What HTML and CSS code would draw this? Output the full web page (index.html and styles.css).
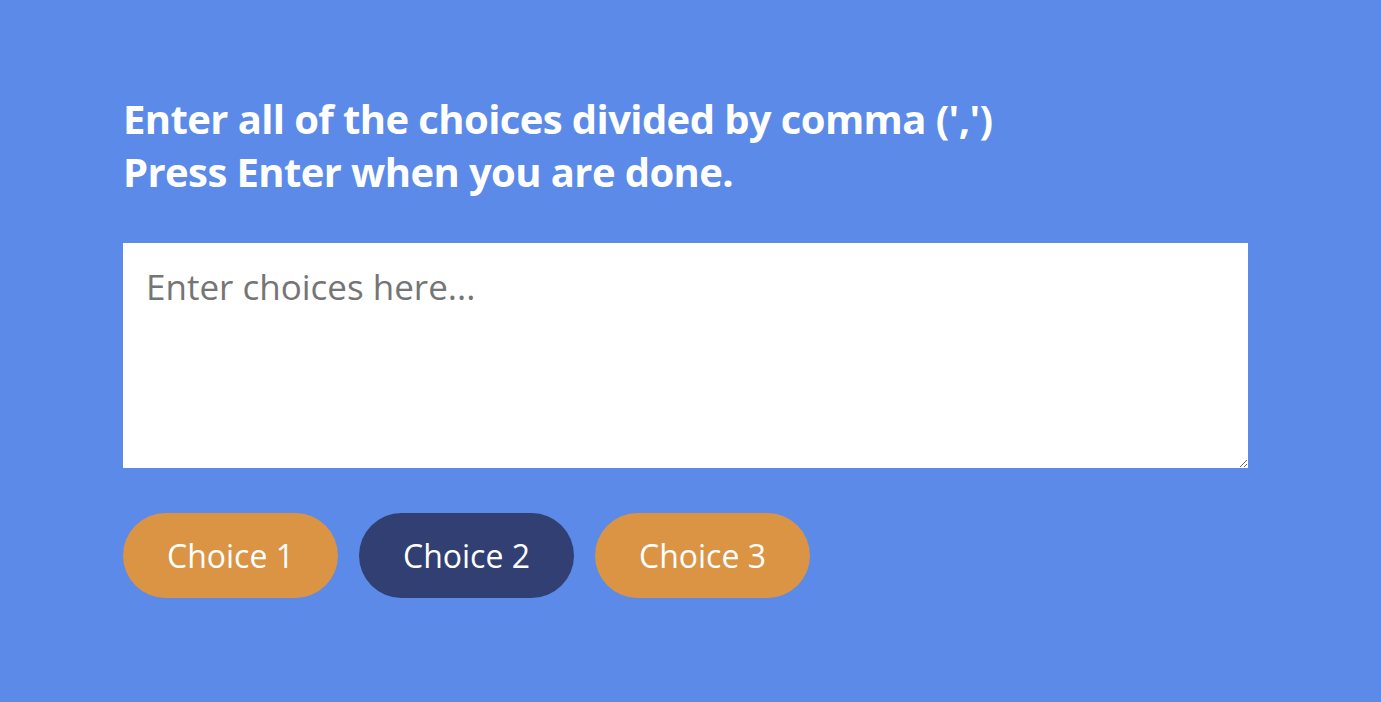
FILE: index.html
```html
<!DOCTYPE html>
<html>
<head>
<meta charset="utf-8">
<link rel="stylesheet" href="styles.css">
</head>
<body>
<main class="page">
  <h1 class="title">Enter all of the choices divided by comma (',')<br>Press Enter when you are done.</h1>
  <textarea class="choices-input" placeholder="Enter choices here..."></textarea>
  <div class="choices">
    <span class="choice">Choice 1</span>
    <span class="choice choice--active">Choice 2</span>
    <span class="choice">Choice 3</span>
  </div>
</main>
</body>
</html>
```
FILE: styles.css
```css
html, body {
  margin: 0;
  height: 100%;
  background: #5b8ae8;
}
body {
  font-family: "Open Sans", "Lato", sans-serif;
}
.page {
  padding: 92px 133px 0 123px;
  display: flex;
  flex-direction: column;
}
.title {
  margin: 0;
  color: #fff;
  font-weight: 700;
  font-size: 40px;
  line-height: 53px;
  letter-spacing: -0.6px;
}
.choices-input {
  margin-top: 45px;
  box-sizing: border-box;
  width: 1125px;
  height: 225px;
  border: none;
  outline: none;
  padding: 20px 23px;
  font-family: inherit;
  font-size: 35px;
  color: #333;
  resize: vertical;
  display: block;
}
.choices-input::placeholder {
  color: #757575;
}
.choices {
  margin-top: 45px;
  display: flex;
  gap: 21px;
}
.choice {
  width: 215px;
  height: 85px;
  border-radius: 43px;
  background: #da9444;
  color: #fff;
  font-size: 32px;
  display: flex;
  align-items: center;
  justify-content: center;
}
.choice--active {
  background: #313f73;
}
```
